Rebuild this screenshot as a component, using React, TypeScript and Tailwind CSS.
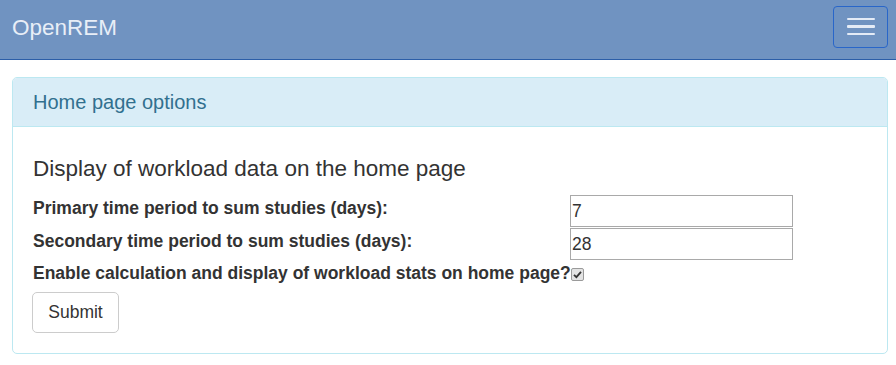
import React from 'react';

const font = { fontFamily: '"Liberation Sans", Arial, sans-serif' };

function Row({ label, value }: { label: string; value: string }) {
  return (
    <div className="flex items-center h-[32px]">
      <label className="w-[537px] shrink-0 whitespace-nowrap pb-[6px] font-bold text-[17.5px] text-[#333]">
        {label}
      </label>
      <input
        type="text"
        defaultValue={value}
        className="w-[223px] h-[32px] border border-[#a9a9a9] px-[1px] text-[17.5px] text-[#333] bg-white outline-none"
      />
    </div>
  );
}

export default function App() {
  return (
    <div className="bg-white min-h-[365px] w-[896px]" style={font}>
      <nav className="h-[60px] bg-[#7093c1] border-b border-[#2c5ea8] flex items-center justify-between pl-[12px] pr-[8px]">
        <span className="text-[22.5px] text-[#e8eef7] pb-[3px]">OpenREM</span>
        <button className="w-[55px] h-[42px] mb-[6px] rounded-[4px] border border-[#2966c9] flex flex-col items-center justify-center gap-[5px]">
          <span className="block w-[28px] h-[2.5px] rounded-[1px] bg-[#e4ebf6]" />
          <span className="block w-[28px] h-[2.5px] rounded-[1px] bg-[#e4ebf6]" />
          <span className="block w-[28px] h-[2.5px] rounded-[1px] bg-[#e4ebf6]" />
        </button>
      </nav>

      <div className="mt-[17px] ml-[12px] w-[876px] border border-[#bce8f1] rounded-[5px] overflow-hidden">
        <div className="h-[49px] bg-[#d9edf7] border-b border-[#bce8f1] flex items-center pl-[20px]">
          <h3 className="text-[20px] text-[#31708f] leading-[22px]">Home page options</h3>
        </div>
        <div className="pl-[20px] pt-[29px] pb-[20px]">
          <h4 className="text-[22.5px] leading-[25px] text-[#333]">Display of workload data on the home page</h4>
          <div className="mt-[14px]">
            <Row label="Primary time period to sum studies (days):" value="7" />
          </div>
          <div className="mt-[1px]">
            <Row label="Secondary time period to sum studies (days):" value="28" />
          </div>
          <div className="mt-[2px] flex items-center h-[23px]">
            <label className="w-[537px] shrink-0 whitespace-nowrap font-bold text-[17.5px] text-[#333]">
              Enable calculation and display of workload stats on home page?
            </label>
            <span className="ml-[1px] mt-[1px] w-[13px] h-[13px] rounded-[2px] border border-[#9a9a9a] bg-[#e3e3e3] flex items-center justify-center">
              <svg width="9" height="9" viewBox="0 0 9 9">
                <path d="M1 4.8 L3.4 7.2 L8 1.8" fill="none" stroke="#333" strokeWidth="1.8" />
              </svg>
            </span>
          </div>
          <button className="mt-[7px] ml-[-1px] w-[87px] h-[41px] border border-[#ccc] rounded-[5px] bg-white text-[17.5px] text-[#333]">
            Submit
          </button>
        </div>
      </div>
    </div>
  );
}
